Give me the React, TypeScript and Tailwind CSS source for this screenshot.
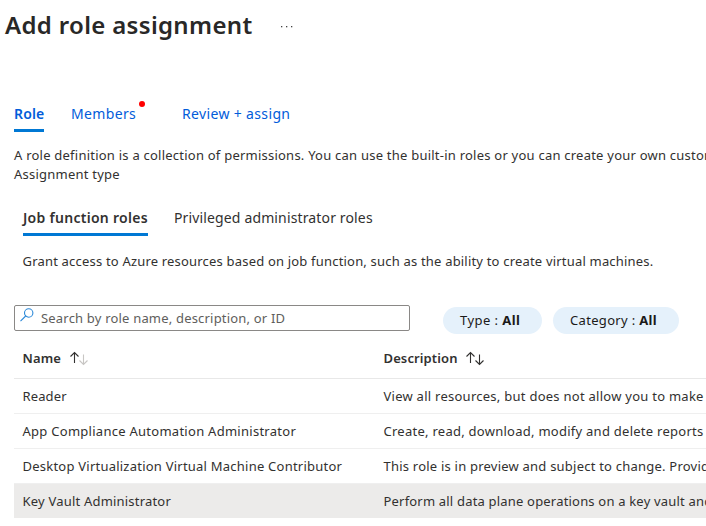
const roles = [
  {
    name: 'Reader',
    description: 'View all resources, but does not allow you to make',
    nameSpacing: 'tracking-[0.12px]',
    descriptionSpacing: 'tracking-[0.26px]',
  },
  {
    name: 'App Compliance Automation Administrator',
    description: 'Create, read, download, modify and delete reports o',
    nameSpacing: 'tracking-[0.27px]',
    descriptionSpacing: 'tracking-[0.26px]',
  },
  {
    name: 'Desktop Virtualization Virtual Machine Contributor',
    description: 'This role is in preview and subject to change. Provid',
    nameSpacing: 'tracking-[0.23px]',
    descriptionSpacing: 'tracking-[0.22px]',
  },
  {
    name: 'Key Vault Administrator',
    description: 'Perform all data plane operations on a key vault and',
    nameSpacing: 'tracking-[0.2px]',
    descriptionSpacing: 'tracking-[0.19px]',
    selected: true,
  },
];

function SortArrows({ downClass }: { downClass: string }) {
  return (
    <svg className="h-4 w-5" viewBox="0 0 20 16" fill="none">
      <path className="stroke-[#323130]" d="M5.5 12V1.5M1.5 5.5L5.5 1.5L9.5 5.5" strokeWidth="1.1" />
      <path className={downClass} d="M14.5 3.5V13.5M10.5 9.5L14.5 13.5L18.5 9.5" strokeWidth="1.1" />
    </svg>
  );
}

function FilterPill({ label, className }: { label: string; className: string }) {
  return (
    <button className={`flex h-[27px] items-center rounded-full bg-[#e5f1fb] pl-[17px] text-[#1b1a19] ${className}`}>
      {label}&nbsp;:&nbsp;<b className="font-bold">All</b>
    </button>
  );
}

export default function App() {
  return (
    <div className="h-[526px] w-[706px] overflow-hidden bg-white font-['Noto_Sans',sans-serif] text-[13px] whitespace-nowrap text-[#323130]">
      <header className="flex h-[52px] items-center pl-[5px]">
        <h1 className="-mt-0.5 text-[24px] font-semibold tracking-[0.33px] text-[#292827]">Add role assignment</h1>
        <svg className="mt-px ml-[28px] h-1 w-[14px]" viewBox="0 0 14 4" fill="#444">
          <rect x="1" y="1" width="1.3" height="1.3" />
          <rect x="6" y="1" width="1.3" height="1.3" />
          <rect x="11" y="1" width="1.3" height="1.3" />
        </svg>
      </header>

      <nav className="mt-[50px] flex h-[30px] pl-[14px] text-[14px] tracking-[0.35px] text-[#015cda]">
        <span className="h-[30px] w-[30px] border-b-[3px] border-[#0078d4] leading-6 font-semibold tracking-[0.15px]">Role</span>
        <span className="relative ml-[27px] w-[111px] leading-6">
          Members
          <i className="absolute top-[-1px] left-[68px] h-[6px] w-[6px] rounded-full bg-[#f00]" />
        </span>
        <span className="leading-6">Review + assign</span>
      </nav>

      <div className="mt-[14px] pl-[14px] leading-[19px] tracking-[0.23px]">
        <p>A role definition is a collection of permissions. You can use the built-in roles or you can create your own custom</p>
        <p>Assignment type</p>
      </div>

      <nav className="mt-[22px] flex h-[30px] pl-[23px] text-[14px]">
        <span className="h-[30px] w-[125px] border-b-[3px] border-[#0078d4] leading-6 font-semibold tracking-[0.28px]">Job function roles</span>
        <span className="ml-[26px] leading-6 tracking-[0.14px]">Privileged administrator roles</span>
      </nav>

      <p className="mt-[15px] pl-[22.5px] leading-5 tracking-[0.19px]">
        Grant access to Azure resources based on job function, such as the ability to create virtual machines.
      </p>

      <div className="mt-[34px] flex h-[29px] pl-[14px]">
        <div className="flex h-[26px] w-[396px] items-center rounded-[2px] border border-[#8a8886] text-[#605e5c]">
          <svg className="mt-[-6px] ml-[5px] h-[14px] w-[14px]" viewBox="0 0 14 14" fill="none" stroke="#2b88d8" strokeWidth="1.1">
            <circle cx="8.7" cy="5" r="4.2" />
            <path d="M5.7 8L0.5 13.2" />
          </svg>
          <span className="mt-[2px] ml-[7px] tracking-[0.19px]">Search by role name, description, or ID</span>
        </div>
        <div className="mt-[2px] ml-[33px] flex gap-[11px]">
          <FilterPill label="Type" className="w-[99px] tracking-[0.45px]" />
          <FilterPill label="Category" className="w-[126px] tracking-[0.33px]" />
        </div>
      </div>

      <div className="ml-[14px]">
        <div className="flex h-[45px] items-center border-b border-[#e8e8e8] pt-[5px] pl-[8.5px] font-semibold tracking-[0.12px]">
          <div className="flex w-[361px] shrink-0 items-center">
            Name <span className="ml-[8px]"><SortArrows downClass="stroke-[#c8c6c4]" /></span>
          </div>
          Description <span className="ml-[7px]"><SortArrows downClass="stroke-[#323130]" /></span>
        </div>
        {roles.map((role) => (
          <div
            key={role.name}
            className={`flex items-center pt-[2px] pl-[8.5px] ${role.selected ? 'h-[34px] bg-[#ecebea]' : 'h-[35px] border-b border-[#efefef]'}`}
          >
            <div className={`w-[361px] shrink-0 ${role.nameSpacing}`}>{role.name}</div>
            <div className={`min-w-0 ${role.descriptionSpacing}`}>{role.description}</div>
          </div>
        ))}
      </div>
    </div>
  );
}
